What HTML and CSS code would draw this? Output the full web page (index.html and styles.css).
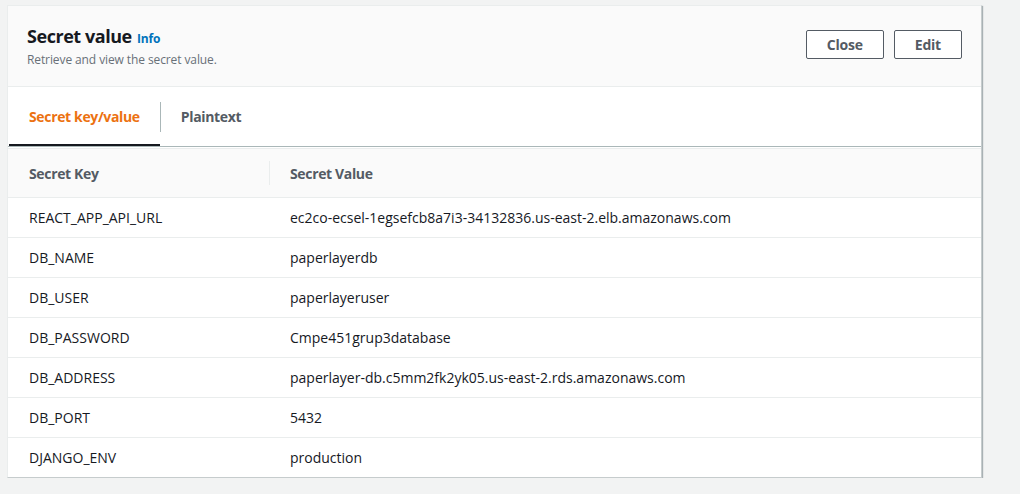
FILE: index.html
```html
<!DOCTYPE html>
<html>
<head>
<meta charset="utf-8">
<link rel="stylesheet" href="styles.css">
</head>
<body>
<div class="card">
  <div class="header">
    <div class="heading">
      <h2 class="title">Secret value <a class="info">Info</a></h2>
      <p class="desc">Retrieve and view the secret value.</p>
    </div>
    <div class="actions">
      <button class="btn">Close</button>
      <button class="btn">Edit</button>
    </div>
  </div>
  <div class="tabs">
    <div class="tab active">Secret key/value</div>
    <div class="tab-sep"></div>
    <div class="tab">Plaintext</div>
  </div>
  <div class="table">
    <div class="row head">
      <div class="cell key">Secret Key</div>
      <div class="col-sep"></div>
      <div class="cell val">Secret Value</div>
    </div>
    <div class="row"><div class="cell key">REACT_APP_API_URL</div><div class="cell val">ec2co-ecsel-1egsefcb8a7i3-34132836.us-east-2.elb.amazonaws.com</div></div>
    <div class="row"><div class="cell key">DB_NAME</div><div class="cell val">paperlayerdb</div></div>
    <div class="row"><div class="cell key">DB_USER</div><div class="cell val">paperlayeruser</div></div>
    <div class="row"><div class="cell key">DB_PASSWORD</div><div class="cell val">Cmpe451grup3database</div></div>
    <div class="row"><div class="cell key">DB_ADDRESS</div><div class="cell val">paperlayer-db.c5mm2fk2yk05.us-east-2.rds.amazonaws.com</div></div>
    <div class="row"><div class="cell key">DB_PORT</div><div class="cell val">5432</div></div>
    <div class="row last"><div class="cell key">DJANGO_ENV</div><div class="cell val">production</div></div>
  </div>
</div>
</body>
</html>
```
FILE: styles.css
```css
* { box-sizing: border-box; }
html, body { margin: 0; padding: 0; }
body {
  background: #f2f3f3;
  font-family: "Open Sans", "Liberation Sans", sans-serif;
  color: #16191f;
  padding: 5px 0 0 7px;
}
.card {
  width: 975px;
  background: #fff;
  border: 1px solid #eaeded;
  border-right-color: #c6cccd;
  border-bottom-color: #c6cccd;
  box-shadow: 1px 1px 1px rgba(0, 28, 36, 0.3);
}
.header {
  height: 81px;
  background: #fafafa;
  border-bottom: 1px solid #eaeded;
  display: flex;
  justify-content: space-between;
  align-items: flex-start;
  padding: 19px 19px 0 19px;
}
.title {
  margin: 0;
  font-size: 18px;
  line-height: 22px;
  font-weight: 700;
  letter-spacing: -0.45px;
  color: #16191f;
}
.info {
  font-size: 12px;
  font-weight: 700;
  letter-spacing: -0.2px;
  color: #0073bb;
  margin-left: 1px;
}
.desc {
  margin: 2px 0 0;
  font-size: 12px;
  line-height: 16px;
  letter-spacing: -0.1px;
  color: #687078;
}
.actions {
  display: flex;
  gap: 10px;
  padding-top: 5px;
}
.btn {
  font-family: inherit;
  font-size: 14px;
  font-weight: 700;
  letter-spacing: -0.2px;
  color: #545b64;
  background: #fff;
  border: 1px solid #545b64;
  border-radius: 2px;
  height: 29px;
  padding: 0 20px;
}
.tabs {
  height: 60px;
  border-bottom: 1px solid #aab7b8;
  display: flex;
  align-items: center;
  padding-left: 1px;
}
.tab {
  height: 59px;
  display: flex;
  align-items: center;
  padding: 0 20px;
  font-size: 14px;
  font-weight: 700;
  letter-spacing: -0.35px;
  color: #545b64;
}
.tab.active {
  color: #ec7211;
  box-shadow: inset 0 -2px 0 #16191f;
}
.tab-sep {
  width: 1px;
  height: 30px;
  background: #aab7b8;
}
.table {
  border-top: 1px solid #eaeded;
  margin-top: 1px;
}
.row {
  display: flex;
  align-items: center;
  height: 40px;
  border-bottom: 1px solid #eaeded;
  font-size: 14px;
}
.row.last { border-bottom: none; height: 39px; }
.row.head {
  height: 49px;
  background: #fafafa;
  font-weight: 700;
  letter-spacing: -0.35px;
  color: #545b64;
}
.cell.key { width: 262px; padding-left: 21px; }
.cell.val { padding-left: 20px; }
.row.head .cell.key { width: 261px; }
.col-sep {
  width: 1px;
  height: 24px;
  background: #eaeded;
}
```
